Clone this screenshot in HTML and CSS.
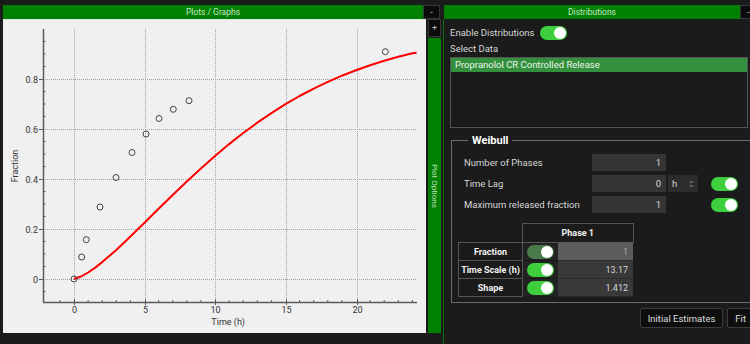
FILE: index.html
```html
<!doctype html>
<html lang="en">
<head>
    <meta charset="UTF-8">
    <title>Distributions</title>
    <link rel="stylesheet" href="styles.css">
</head>
<body>
    <div class="app">
        <section class="plots">
            <div class="panel-head">
                <div class="title-bar">Plots / Graphs</div>
                <button class="mini-btn">-</button>
            </div>
            <div class="plots-body">
                <div class="plot">
                    <svg width="423" height="313" viewBox="3 20 423 313">
                        <!-- grid -->
                        <g class="grid">
                            <path d="M74.5 29V301M145.5 29V301M215.5 29V301M286.5 29V301M357.5 29V301"/>
                            <path d="M45 79.5H417M45 129.5H417M45 179.5H417M45 229.5H417M45 279.5H417"/>
                        </g>
                        <!-- axes and ticks -->
                        <g class="axis">
                            <path d="M43.5 29V302.5M43 302.5H417"/>
                            <path class="tick" d="M39 79.5H43M39 129.5H43M39 179.5H43M39 229.5H43M39 279.5H43"/>
                            <path class="tick" d="M43 41.5H45.5M43 54H45.5M43 66.5H45.5M43 91.5H45.5M43 104H45.5M43 116.5H45.5M43 141.5H45.5M43 154H45.5M43 166.5H45.5M43 191.5H45.5M43 204H45.5M43 216.5H45.5M43 241.5H45.5M43 254H45.5M43 266.5H45.5M43 291.5H45.5"/>
                            <path class="tick" d="M74.5 299V305M145.5 299V305M215.5 299V305M286.5 299V305M357.5 299V305"/>
                            <path class="tick" d="M59.9 300V302M88.1 300V302M102.2 300V302M116.3 300V302M130.4 300V302M158.6 300V302M172.7 300V302M186.8 300V302M200.9 300V302M229.1 300V302M243.2 300V302M257.3 300V302M271.4 300V302M299.6 300V302M313.7 300V302M327.8 300V302M341.9 300V302M370.1 300V302M384.2 300V302M398.3 300V302M412.4 300V302"/>
                        </g>
                        <g class="labels">
                            <text x="38" y="82.5" text-anchor="end">0.8</text>
                            <text x="38" y="132.5" text-anchor="end">0.6</text>
                            <text x="38" y="182.5" text-anchor="end">0.4</text>
                            <text x="38" y="232.5" text-anchor="end">0.2</text>
                            <text x="38" y="282.5" text-anchor="end">0</text>
                            <text x="74.5" y="312.5" text-anchor="middle">0</text>
                            <text x="145.5" y="312.5" text-anchor="middle">5</text>
                            <text x="215.5" y="312.5" text-anchor="middle">10</text>
                            <text x="286.5" y="312.5" text-anchor="middle">15</text>
                            <text x="357.5" y="312.5" text-anchor="middle">20</text>
                            <text x="245" y="324.5" text-anchor="end">Time (h)</text>
                            <text x="18" y="166" text-anchor="middle" transform="rotate(-90 18 166)">Fraction</text>
                        </g>
                        <!-- fitted weibull curve -->
                        <polyline class="curve" points="74,279 81,276.5 88.1,272.5 95.2,267.6 102.2,262.1 116.3,249.9 130.4,236.6 144.5,222.8 158.6,208.8 172.7,195 186.8,181.5 200.9,168.4 215,155.9 229.1,144.1 243.2,133 257.3,122.7 271.4,113.1 285.5,104.2 299.6,96 313.7,88.6 327.8,81.9 341.9,75.7 356,70.2 370.1,65.2 384.2,60.8 398.3,56.8 412.4,53.3 416.6,52.8"/>
                        <!-- observed data -->
                        <g class="points">
                            <circle cx="74" cy="279" r="3"/>
                            <circle cx="81.7" cy="257" r="3"/>
                            <circle cx="86.3" cy="239.7" r="3"/>
                            <circle cx="100" cy="207" r="3"/>
                            <circle cx="116" cy="177.5" r="3"/>
                            <circle cx="132" cy="152.5" r="3"/>
                            <circle cx="146" cy="134" r="3"/>
                            <circle cx="159" cy="118.5" r="3"/>
                            <circle cx="173.3" cy="109.3" r="3"/>
                            <circle cx="189" cy="100.7" r="3"/>
                            <circle cx="385.3" cy="51.7" r="3"/>
                        </g>
                    </svg>
                </div>
                <div class="side">
                    <button class="mini-btn">+</button>
                    <div class="side-bar">Plot Options</div>
                </div>
            </div>
        </section>

        <section class="dist">
            <div class="panel-head">
                <div class="title-bar">Distributions</div>
                <button class="mini-btn">-</button>
            </div>
            <div class="dist-body">
                <div class="enable-row">
                    <span>Enable Distributions</span>
                    <span class="toggle"></span>
                </div>
                <div class="select-label">Select Data</div>
                <div class="data-list">
                    <div class="data-item">Propranolol CR Controlled Release</div>
                </div>

                <fieldset class="group">
                    <legend>Weibull</legend>
                    <div class="param-row">
                        <label>Number of Phases</label>
                        <span class="num">1</span>
                    </div>
                    <div class="param-row">
                        <label>Time Lag</label>
                        <span class="num">0</span>
                        <span class="unit">h
                            <svg width="5" height="8" viewBox="0 0 5 8"><path d="M0.8 3L2.5 1.3L4.2 3M0.8 5L2.5 6.7L4.2 5"/></svg>
                        </span>
                        <span class="toggle lag-toggle"></span>
                    </div>
                    <div class="param-row">
                        <label>Maximum released fraction</label>
                        <span class="num">1</span>
                        <span class="toggle max-toggle"></span>
                    </div>

                    <table class="phase-table">
                        <tr class="head-row">
                            <th class="blank"></th>
                            <th class="phase-head" colspan="2">Phase 1</th>
                        </tr>
                        <tr>
                            <th class="row-head">Fraction</th>
                            <td class="switch-cell"><span class="toggle dim"></span></td>
                            <td class="value fixed">1</td>
                        </tr>
                        <tr>
                            <th class="row-head">Time Scale (h)</th>
                            <td class="switch-cell"><span class="toggle"></span></td>
                            <td class="value">13.17</td>
                        </tr>
                        <tr>
                            <th class="row-head">Shape</th>
                            <td class="switch-cell"><span class="toggle"></span></td>
                            <td class="value">1.412</td>
                        </tr>
                    </table>
                </fieldset>

                <div class="actions">
                    <button class="btn">Initial Estimates</button>
                    <button class="btn">Fit</button>
                </div>
            </div>
        </section>
    </div>
</body>
</html>
```

FILE: styles.css
```css
body {
    margin: 0;
    background-color: #1b1b1b;
    color: #d6d6d6;
    font-family: 'Roboto', 'Liberation Sans', sans-serif;
    font-size: 9.5px;
}

.app {
    display: flex;
    height: 344px;
    padding-top: 5px;
    box-sizing: border-box;
    overflow: hidden;
}

/* shared panel header */
.panel-head {
    display: flex;
    height: 14px;
    flex-shrink: 0;
}

.title-bar {
    background-color: #008000;
    color: #c8e6c8;
    font-size: 8.5px;
    line-height: 14px;
    text-align: center;
}

.mini-btn {
    flex-shrink: 0;
    width: 17px;
    height: 14px;
    padding: 0;
    background-color: #0b0b0b;
    border: 1px solid #363636;
    color: #bbb;
    font-family: inherit;
    font-size: 9px;
    line-height: 11px;
}

/* left: plots */
.plots {
    width: 441px;
    flex-shrink: 0;
    padding-left: 3px;
    box-sizing: border-box;
    display: flex;
    flex-direction: column;
}

.plots .title-bar {
    flex: 1;
}

.plots .panel-head .mini-btn {
    margin-right: 1px;
}

.plots-body {
    display: flex;
    gap: 2px;
    height: 314px;
}

.plot {
    width: 423px;
    background-color: #f0f0f0;
    border-top: 1px solid #d6ead6;
}

.plot svg {
    display: block;
}

.grid path {
    fill: none;
    stroke: #a2a2a2;
    stroke-width: 1;
    stroke-dasharray: 1 1;
}

.axis path {
    fill: none;
    stroke: #5a5a5a;
    stroke-width: 1.5;
}

.axis path.tick {
    stroke-width: 1;
}

.labels text {
    fill: #333;
    font-size: 9px;
    font-family: 'Roboto', 'Liberation Sans', sans-serif;
}

.curve {
    fill: none;
    stroke: #f00;
    stroke-width: 2;
    stroke-linejoin: round;
}

.points circle {
    fill: none;
    stroke: #444;
    stroke-width: 1;
}

.side {
    width: 13px;
    display: flex;
    flex-direction: column;
    gap: 1px;
}

.side .mini-btn {
    width: 13px;
    height: 18px;
}

.side-bar {
    flex: 1;
    background-color: #008000;
    color: #c2e2c2;
    font-size: 8px;
    writing-mode: vertical-rl;
    display: flex;
    align-items: center;
    justify-content: center;
}

/* right: distributions */
.dist {
    width: 309px;
    flex-shrink: 0;
    display: flex;
    flex-direction: column;
    overflow: hidden;
}

.dist .panel-head {
    margin-left: 3px;
}

.dist .title-bar {
    flex: 0 0 296px;
}

.dist-body {
    flex: 1;
    margin-left: 2px;
    border-left: 1px solid #0c6e0c;
    padding-left: 6px;
}

.enable-row {
    display: flex;
    align-items: center;
    gap: 5px;
    height: 13px;
    margin-top: 7px;
}

.select-label {
    margin-top: 4px;
    line-height: 12px;
}

.data-list {
    height: 71px;
    margin: 2px 2px 0 0;
    border: 1px solid #555;
    box-sizing: border-box;
}

.data-item {
    height: 14px;
    line-height: 14px;
    padding-left: 4px;
    background-color: #33903c;
    color: #eaf5ea;
}

.toggle {
    display: inline-block;
    flex-shrink: 0;
    position: relative;
    width: 27px;
    height: 14px;
    border-radius: 7px;
    background-color: #3dcf3d;
    vertical-align: middle;
}

.toggle::after {
    content: '';
    position: absolute;
    top: 1px;
    right: 1px;
    width: 12px;
    height: 12px;
    border-radius: 50%;
    background-color: #fff;
}

.toggle.dim {
    background-color: #4b7a4b;
}

/* weibull group */
.group {
    margin: 6px -6px 0 1px;
    padding: 7px 0 5px 12px;
    border: 1px solid #6a6a6a;
}

.group legend {
    margin-left: 4px;
    padding: 0 4px;
    color: #fff;
    font-size: 11px;
    font-weight: bold;
    line-height: 13px;
}

.param-row {
    display: flex;
    align-items: center;
    height: 17px;
    margin-bottom: 4px;
}

.param-row label {
    width: 128px;
}

.num {
    width: 74px;
    height: 17px;
    line-height: 17px;
    padding-right: 5px;
    box-sizing: border-box;
    background-color: #353535;
    text-align: right;
}

.unit {
    display: flex;
    align-items: center;
    justify-content: space-between;
    width: 30px;
    height: 17px;
    margin-left: 2px;
    padding: 0 4px;
    box-sizing: border-box;
    background-color: #2c2c2c;
}

.unit path {
    fill: none;
    stroke: #aaa;
    stroke-width: 0.9;
}

.lag-toggle {
    margin-left: 13px;
}

.max-toggle {
    margin-left: 45px;
}

.phase-table {
    margin: 10px 0 0 -6px;
    border-collapse: collapse;
    font-size: 9px;
}

.phase-table tr {
    height: 18px;
}

.phase-table tr.head-row {
    height: 19px;
}

.phase-table th,
.phase-table td {
    padding: 0;
}

.phase-table th {
    color: #f2f2f2;
    font-weight: bold;
}

.phase-head {
    border: 1px solid #555;
}

.row-head {
    width: 63px;
    border: 1px solid #555;
}

.switch-cell {
    width: 35px;
    text-align: center;
    background-color: #222;
    border-bottom: 1px solid #1a1a1a;
}

.value {
    width: 70px;
    padding-right: 5px !important;
    text-align: right;
    background-color: #393939;
    border-bottom: 1px solid #2c2c2c;
}

.value.fixed {
    background-color: #5c5c5c;
    color: #a8a8a8;
}

.actions {
    display: flex;
    justify-content: flex-end;
    gap: 4px;
    margin: 5px -4px 0 0;
}

.btn {
    height: 20px;
    padding: 0 7px;
    background-color: #0e0e0e;
    border: 1px solid #3c3c3c;
    border-radius: 2px;
    color: #ddd;
    font-family: inherit;
    font-size: 9.5px;
}
```
